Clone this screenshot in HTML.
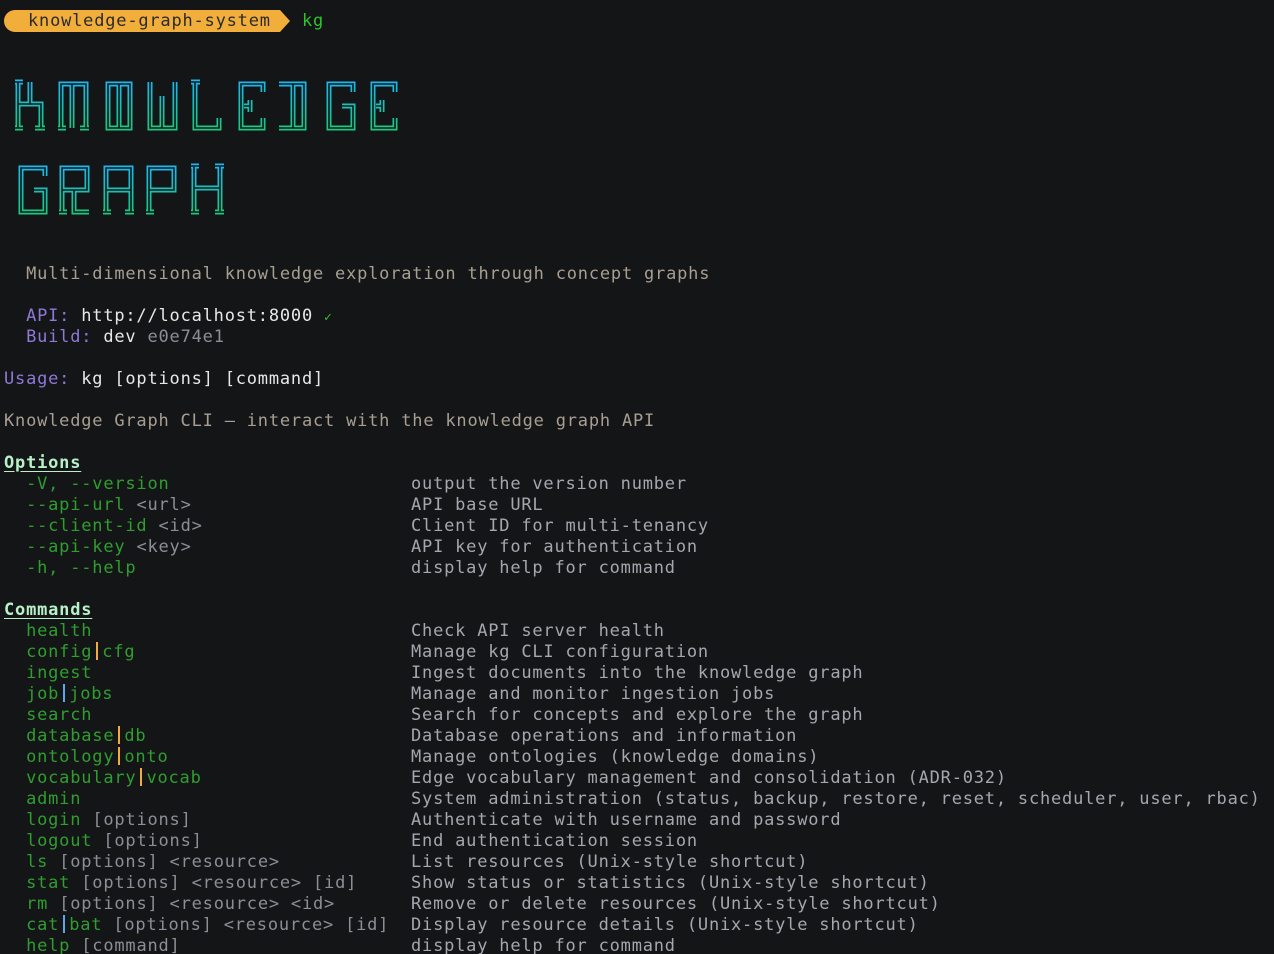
<!DOCTYPE html>
<html><head><meta charset="utf-8"><style>
html,body{margin:0;padding:0;background:#141517;width:1274px;height:954px;overflow:hidden}
body{position:relative;font-family:"DejaVu Sans Mono","Liberation Mono",monospace;font-size:17px;letter-spacing:0.8px;color:#a3a8ae}
.l{position:absolute;left:4px;white-space:pre;line-height:21px;height:21px;margin-top:2px}
.g{color:#2f9e2f}.w{color:#e8e8e8}.p{color:#8f78d8}.t{color:#a89f92}.d{color:#8a8f96}
.h{color:#b8f0c8;font-weight:bold;text-decoration:underline;text-underline-offset:3px}
.o{display:inline-block;width:2px;height:18px;background:#f0ad3c;vertical-align:-3px;margin:0 4px 0 4px}
.b{display:inline-block;width:2px;height:18px;background:#5aa8e8;vertical-align:-3px;margin:0 4px 0 4px}
.r{position:absolute;left:411px;white-space:pre;line-height:21px;color:#a3a8ae;margin-top:2px}
</style></head><body>
<div style="position:absolute;left:4px;top:10px;width:276px;height:22px;background:#f2ae3a;border-radius:11px 0 0 11px"></div>
<div style="position:absolute;left:280px;top:10px;width:0;height:0;border-top:11px solid transparent;border-bottom:11px solid transparent;border-left:10px solid #f2ae3a"></div>
<div class="l" style="left:28px;top:9px;color:#2a2a2a">knowledge-graph-system</div>
<div class="l" style="left:302px;top:9px;color:#2fc42f">kg</div>

<svg style="position:absolute;left:0;top:0" width="420" height="230">
<defs>
<linearGradient id="g1" gradientUnits="userSpaceOnUse" x1="0" y1="0" x2="0" y2="46"><stop offset="0" stop-color="#18b8f0"/><stop offset="1" stop-color="#18c880"/></linearGradient>
<path id="K" d="M3 0V46M3 22H15V0M15 22H26V46M0 46H8M20 46H30M0 0H8"/>
<path id="N" d="M3 46V2H28V46M0 46H8M22 46H31M14 2V46"/>
<path id="O" d="M3 2H25V46H3ZM14 2V46"/>
<path id="W" d="M3 0V46H28V0M15 14V46"/>
<path id="L" d="M4 0V46H28V36M0 0H9"/>
<path id="E" d="M25 10V2H3V46H25V36M12 18V30M6 24H12"/>
<path id="D" d="M0 2H25V46H0M14 2V46"/>
<path id="G" d="M27 10V2H3V46H27V24H16"/>
<path id="R" d="M3 46V2H28V24H3M15 24V46H30M0 46H8"/>
<path id="A" d="M3 46V2H28V46M3 24H28M0 46H8M22 46H31"/>
<path id="P" d="M3 46V2H28V24H3M0 46H8"/>
<path id="H" d="M3 0V46M29 0V46M3 22H29M0 46H8M24 46H33M0 0H8M24 0H33"/>
</defs>
<g fill="none" stroke-width="5" stroke="url(#g1)">
<use href="#K" x="15" y="82"/><use href="#N" x="58" y="82"/><use href="#O" x="105" y="82"/><use href="#W" x="147" y="82"/><use href="#L" x="191" y="82"/><use href="#E" x="238" y="82"/><use href="#D" x="279" y="82"/><use href="#G" x="326" y="82"/><use href="#E" x="370" y="82"/>
<use href="#G" x="18" y="166"/><use href="#R" x="59" y="166"/><use href="#A" x="103" y="166"/><use href="#P" x="146" y="166"/><use href="#H" x="191" y="166"/>
</g>
<g fill="none" stroke-width="1.6" stroke="#141517">
<use href="#K" x="15" y="82"/><use href="#N" x="58" y="82"/><use href="#O" x="105" y="82"/><use href="#W" x="147" y="82"/><use href="#L" x="191" y="82"/><use href="#E" x="238" y="82"/><use href="#D" x="279" y="82"/><use href="#G" x="326" y="82"/><use href="#E" x="370" y="82"/>
<use href="#G" x="18" y="166"/><use href="#R" x="59" y="166"/><use href="#A" x="103" y="166"/><use href="#P" x="146" y="166"/><use href="#H" x="191" y="166"/>
</g>
</svg>

<div class="l t" style="top:262px">  Multi-dimensional knowledge exploration through concept graphs</div>
<div class="l" style="top:304px"><span class="p">  API: </span><span class="w">http://localhost:8000</span> <span style="color:#2fc42f;font-size:13px">✓</span></div>
<div class="l" style="top:325px"><span class="p">  Build: </span><span class="w">dev</span> <span class="d">e0e74e1</span></div>
<div class="l" style="top:367px"><span class="p">Usage: </span><span class="w">kg [options] [command]</span></div>
<div class="l t" style="top:409px">Knowledge Graph CLI – interact with the knowledge graph API</div>

<div class="l h" style="top:451px">Options</div>
<div class="l" style="top:472px">  <span class="g">-V, --version</span></div>
<div class="l" style="top:493px">  <span class="g">--api-url</span> <span class="d">&lt;url&gt;</span></div>
<div class="l" style="top:514px">  <span class="g">--client-id</span> <span class="d">&lt;id&gt;</span></div>
<div class="l" style="top:535px">  <span class="g">--api-key</span> <span class="d">&lt;key&gt;</span></div>
<div class="l" style="top:556px">  <span class="g">-h, --help</span></div>
<div class="r" style="top:472px">output the version number
API base URL
Client ID for multi-tenancy
API key for authentication
display help for command</div>

<div class="l h" style="top:598px">Commands</div>
<div class="l" style="top:619px">  <span class="g">health</span></div>
<div class="l" style="top:640px">  <span class="g">config</span><span class="o"></span><span class="g">cfg</span></div>
<div class="l" style="top:661px">  <span class="g">ingest</span></div>
<div class="l" style="top:682px">  <span class="g">job</span><span class="b"></span><span class="g">jobs</span></div>
<div class="l" style="top:703px">  <span class="g">search</span></div>
<div class="l" style="top:724px">  <span class="g">database</span><span class="o"></span><span class="g">db</span></div>
<div class="l" style="top:745px">  <span class="g">ontology</span><span class="o"></span><span class="g">onto</span></div>
<div class="l" style="top:766px">  <span class="g">vocabulary</span><span class="o"></span><span class="g">vocab</span></div>
<div class="l" style="top:787px">  <span class="g">admin</span></div>
<div class="l" style="top:808px">  <span class="g">login</span> <span class="d">[options]</span></div>
<div class="l" style="top:829px">  <span class="g">logout</span> <span class="d">[options]</span></div>
<div class="l" style="top:850px">  <span class="g">ls</span> <span class="d">[options] &lt;resource&gt;</span></div>
<div class="l" style="top:871px">  <span class="g">stat</span> <span class="d">[options] &lt;resource&gt; [id]</span></div>
<div class="l" style="top:892px">  <span class="g">rm</span> <span class="d">[options] &lt;resource&gt; &lt;id&gt;</span></div>
<div class="l" style="top:913px">  <span class="g">cat</span><span class="b"></span><span class="g">bat</span> <span class="d">[options] &lt;resource&gt; [id]</span></div>
<div class="l" style="top:934px">  <span class="g">help</span> <span class="d">[command]</span></div>
<div class="r" style="top:619px">Check API server health
Manage kg CLI configuration
Ingest documents into the knowledge graph
Manage and monitor ingestion jobs
Search for concepts and explore the graph
Database operations and information
Manage ontologies (knowledge domains)
Edge vocabulary management and consolidation (ADR-032)
System administration (status, backup, restore, reset, scheduler, user, rbac)
Authenticate with username and password
End authentication session
List resources (Unix-style shortcut)
Show status or statistics (Unix-style shortcut)
Remove or delete resources (Unix-style shortcut)
Display resource details (Unix-style shortcut)
display help for command</div>
</body></html>
